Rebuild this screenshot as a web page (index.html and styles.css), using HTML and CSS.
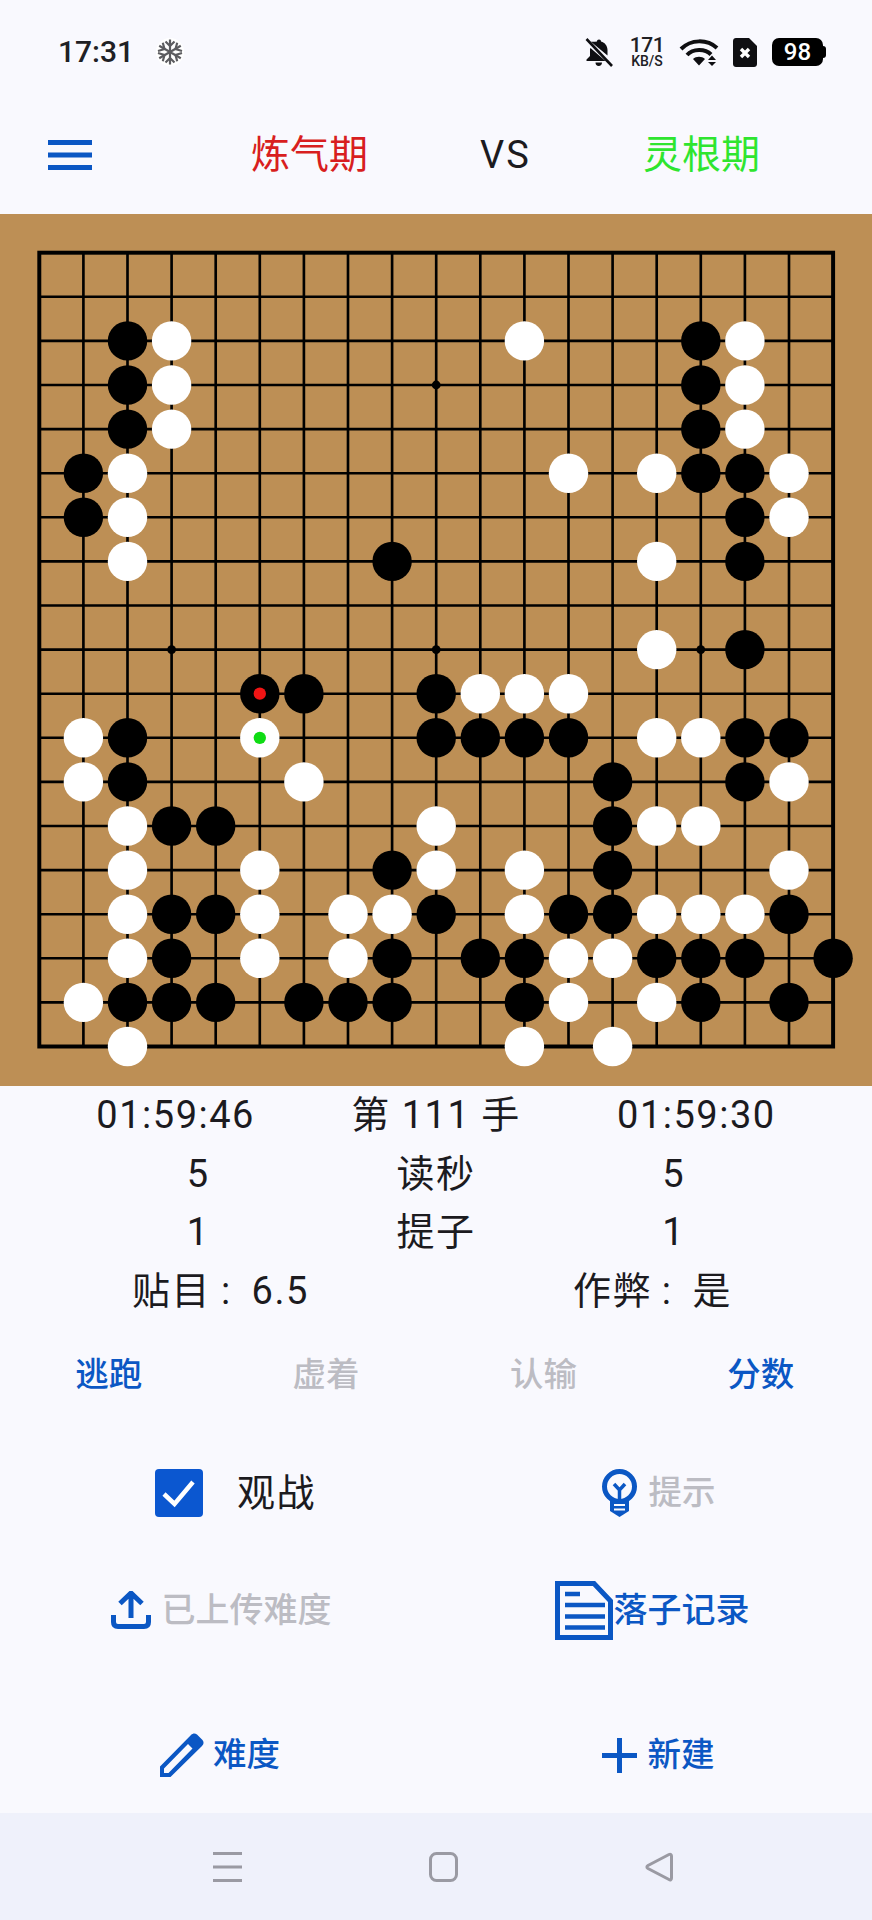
FILE: index.html
```html
<!DOCTYPE html>
<html lang="zh">
<head>
<meta charset="utf-8">
<title>围棋</title>
<link rel="stylesheet" href="styles.css">
</head>
<body>
<div class="page">
  <div class="statusbar">
    <div class="status-left">
      <span class="clock">17:31</span>
      <svg class="snow" viewBox="0 0 28 28"><circle cx="14" cy="14" r="14" fill="#fff"/><g class="snow-lines"><path d="M14 1.500V26.500M3.200 7.800L24.800 20.200M3.200 20.200L24.800 7.800"/><path d="M9.500 3.500L14 8L18.500 3.500M9.500 24.500L14 20L18.500 24.500M2 13L8.500 11L6.800 4.800M26 15L19.500 17L21.200 23.200M2 15L8.500 17L6.800 23.200M26 13L19.500 11L21.200 4.800"/></g></svg>
    </div>
    <div class="status-right">
      <svg class="bell" viewBox="0 0 28 29"><path class="ink" d="M14 1.500C15.300 1.500 16 2.400 16 3.500C20 4.500 22.500 8 22.500 12V17.500L6 3.800C7.300 3.500 9 3.800 12 3.500C12 2.400 12.700 1.500 14 1.500ZM5.500 10L20.500 23H1.500V21.500L5 18V11ZM10.500 24.500H17C17 26.500 15.700 28 13.700 28S10.500 26.500 10.500 24.500Z"/><path class="bell-slash" d="M1.500 1L27 28"/></svg>
      <div class="speed"><span class="speed-num">171</span><span class="speed-unit">KB/S</span></div>
      <svg class="wifi" viewBox="0 0 42 28"><path class="wifi-arc" d="M2 11C12 1 28 1 38 10M8 17C14 10.500 26 10.500 32 16.500"/><path class="ink" d="M14 21C17 18 23 18 26 21L20 27.500ZM33 17.500L37 22H29ZM33 28L29 24H37Z"/></svg>
      <svg class="sim" viewBox="0 0 24 29"><path class="ink" d="M3 0H16L24 8V26C24 27.700 22.700 29 21 29H3C1.300 29 0 27.700 0 26V3C0 1.300 1.300 0 3 0Z"/><path class="sim-x" d="M8 11L16 19M16 11L8 19"/></svg>
      <div class="battery"><span class="battery-level">98</span><span class="battery-nub"></span></div>
    </div>
  </div>

  <header class="header">
    <svg class="menu" viewBox="0 0 44 30"><path d="M0 2.500H44M0 15H44M0 27.500H44"/></svg>
    <div class="name name-red">炼气期</div>
    <div class="vs">VS</div>
    <div class="name name-green">灵根期</div>
  </header>

  <svg class="board" viewBox="0 0 872 872">
    <g transform="translate(39.3 38.7) scale(44.1)">
      <path class="grid" d="M1 0V18M2 0V18M3 0V18M4 0V18M5 0V18M6 0V18M7 0V18M8 0V18M9 0V18M10 0V18M11 0V18M12 0V18M13 0V18M14 0V18M15 0V18M16 0V18M17 0V18M0 1H18M0 2H18M0 3H18M0 4H18M0 5H18M0 6H18M0 7H18M0 8H18M0 9H18M0 10H18M0 11H18M0 12H18M0 13H18M0 14H18M0 15H18M0 16H18M0 17H18"/>
      <rect class="edge" width="18" height="18"/>
      <g class="black">
        <circle r=".1" cx="9" cy="3"/><circle r=".1" cx="3" cy="9"/><circle r=".1" cx="9" cy="9"/><circle r=".1" cx="15" cy="9"/>
        <circle r=".447" cx="2" cy="2"/><circle r=".447" cx="15" cy="2"/>
        <circle r=".447" cx="2" cy="3"/><circle r=".447" cx="15" cy="3"/>
        <circle r=".447" cx="2" cy="4"/><circle r=".447" cx="15" cy="4"/>
        <circle r=".447" cx="1" cy="5"/><circle r=".447" cx="15" cy="5"/><circle r=".447" cx="16" cy="5"/>
        <circle r=".447" cx="1" cy="6"/><circle r=".447" cx="16" cy="6"/>
        <circle r=".447" cx="8" cy="7"/><circle r=".447" cx="16" cy="7"/>
        <circle r=".447" cx="16" cy="9"/>
        <circle r=".447" cx="5" cy="10"/><circle r=".447" cx="6" cy="10"/><circle r=".447" cx="9" cy="10"/>
        <circle r=".447" cx="2" cy="11"/><circle r=".447" cx="9" cy="11"/><circle r=".447" cx="10" cy="11"/><circle r=".447" cx="11" cy="11"/><circle r=".447" cx="12" cy="11"/><circle r=".447" cx="16" cy="11"/><circle r=".447" cx="17" cy="11"/>
        <circle r=".447" cx="2" cy="12"/><circle r=".447" cx="13" cy="12"/><circle r=".447" cx="16" cy="12"/>
        <circle r=".447" cx="3" cy="13"/><circle r=".447" cx="4" cy="13"/><circle r=".447" cx="13" cy="13"/>
        <circle r=".447" cx="8" cy="14"/><circle r=".447" cx="13" cy="14"/>
        <circle r=".447" cx="3" cy="15"/><circle r=".447" cx="4" cy="15"/><circle r=".447" cx="9" cy="15"/><circle r=".447" cx="12" cy="15"/><circle r=".447" cx="13" cy="15"/><circle r=".447" cx="17" cy="15"/>
        <circle r=".447" cx="3" cy="16"/><circle r=".447" cx="8" cy="16"/><circle r=".447" cx="10" cy="16"/><circle r=".447" cx="11" cy="16"/><circle r=".447" cx="14" cy="16"/><circle r=".447" cx="15" cy="16"/><circle r=".447" cx="16" cy="16"/><circle r=".447" cx="18" cy="16"/>
        <circle r=".447" cx="2" cy="17"/><circle r=".447" cx="3" cy="17"/><circle r=".447" cx="4" cy="17"/><circle r=".447" cx="6" cy="17"/><circle r=".447" cx="7" cy="17"/><circle r=".447" cx="8" cy="17"/><circle r=".447" cx="11" cy="17"/><circle r=".447" cx="15" cy="17"/><circle r=".447" cx="17" cy="17"/>
      </g>
      <g class="white">
        <circle r=".447" cx="3" cy="2"/><circle r=".447" cx="11" cy="2"/><circle r=".447" cx="16" cy="2"/>
        <circle r=".447" cx="3" cy="3"/><circle r=".447" cx="16" cy="3"/>
        <circle r=".447" cx="3" cy="4"/><circle r=".447" cx="16" cy="4"/>
        <circle r=".447" cx="2" cy="5"/><circle r=".447" cx="12" cy="5"/><circle r=".447" cx="14" cy="5"/><circle r=".447" cx="17" cy="5"/>
        <circle r=".447" cx="2" cy="6"/><circle r=".447" cx="17" cy="6"/>
        <circle r=".447" cx="2" cy="7"/><circle r=".447" cx="14" cy="7"/>
        <circle r=".447" cx="14" cy="9"/>
        <circle r=".447" cx="10" cy="10"/><circle r=".447" cx="11" cy="10"/><circle r=".447" cx="12" cy="10"/>
        <circle r=".447" cx="1" cy="11"/><circle r=".447" cx="5" cy="11"/><circle r=".447" cx="14" cy="11"/><circle r=".447" cx="15" cy="11"/>
        <circle r=".447" cx="1" cy="12"/><circle r=".447" cx="6" cy="12"/><circle r=".447" cx="17" cy="12"/>
        <circle r=".447" cx="2" cy="13"/><circle r=".447" cx="9" cy="13"/><circle r=".447" cx="14" cy="13"/><circle r=".447" cx="15" cy="13"/>
        <circle r=".447" cx="2" cy="14"/><circle r=".447" cx="5" cy="14"/><circle r=".447" cx="9" cy="14"/><circle r=".447" cx="11" cy="14"/><circle r=".447" cx="17" cy="14"/>
        <circle r=".447" cx="2" cy="15"/><circle r=".447" cx="5" cy="15"/><circle r=".447" cx="7" cy="15"/><circle r=".447" cx="8" cy="15"/><circle r=".447" cx="11" cy="15"/><circle r=".447" cx="14" cy="15"/><circle r=".447" cx="15" cy="15"/><circle r=".447" cx="16" cy="15"/>
        <circle r=".447" cx="2" cy="16"/><circle r=".447" cx="5" cy="16"/><circle r=".447" cx="7" cy="16"/><circle r=".447" cx="12" cy="16"/><circle r=".447" cx="13" cy="16"/>
        <circle r=".447" cx="1" cy="17"/><circle r=".447" cx="12" cy="17"/><circle r=".447" cx="14" cy="17"/>
        <circle r=".447" cx="2" cy="18"/><circle r=".447" cx="11" cy="18"/><circle r=".447" cx="13" cy="18"/>
      </g>
      <circle class="mark-red" r=".14" cx="5" cy="10"/>
      <circle class="mark-green" r=".14" cx="5" cy="11"/>
    </g>
  </svg>

  <section class="stats">
    <div class="stat-row evenly"><span>01:59:46</span><span>第 111 手</span><span>01:59:30</span></div>
    <div class="stat-row evenly"><span>5</span><span>读秒</span><span>5</span></div>
    <div class="stat-row evenly"><span>1</span><span>提子</span><span>1</span></div>
    <div class="stat-row around"><span>贴目 :&nbsp; 6.5</span><span>作弊 :&nbsp; 是</span></div>
  </section>

  <nav class="actions">
    <span class="act on">逃跑</span>
    <span class="act off">虚着</span>
    <span class="act off">认输</span>
    <span class="act on">分数</span>
  </nav>

  <section class="tools">
    <div class="tool tool-watch">
      <svg class="check" viewBox="0 0 48 48"><rect width="48" height="48" rx="4"/><path d="M9 25L19.500 35L38 13"/></svg>
      <span class="watch-label">观战</span>
    </div>
    <div class="tool gap-hint">
      <svg class="bulb" viewBox="0 0 37 48"><circle class="bulb-head" cx="18.500" cy="17.500" r="15"/><path class="bulb-stem" d="M13 15L18.500 21L24 15M18.500 21V31"/><path class="bulb-fill" d="M9 31H28V42L18.500 48L9 42Z"/><path class="bulb-gap" d="M13 36H24M13 40.500H24"/></svg>
      <span class="off">提示</span>
    </div>
    <div class="tool gap-upload">
      <svg class="upload" viewBox="0 0 40 38"><path d="M20 2V27M9 12.500L20 2L31 12.500M2.500 24V31C2.500 34 4 35.500 7 35.500H33C36 35.500 37.500 34 37.500 31V24"/></svg>
      <span class="off">已上传难度</span>
    </div>
    <div class="tool tool-doc">
      <svg class="doc" viewBox="0 0 58 59"><path class="doc-outline" d="M2.500 2.500H39L55.500 20V56.500H2.500Z"/><path class="doc-lines" d="M10 13H25M10 24H50M10 35.500H50M10 46.500H50"/></svg>
      <span class="on">落子记录</span>
    </div>
    <div class="tool tool-low gap-pen">
      <svg class="pen" viewBox="0 0 44 44"><path d="M0 44V33.500L31 2C33 0 35 0 37 1.500L42.500 7C44 9 44 11 42 13L10.500 44ZM4 40H8.500L32.500 15.500L28 11L4 35.500Z"/></svg>
      <span class="on">难度</span>
    </div>
    <div class="tool tool-low gap-hint">
      <svg class="plus" viewBox="0 0 35 35"><path d="M0 17.500H35M17.500 0V35"/></svg>
      <span class="on">新建</span>
    </div>
  </section>

  <footer class="navbar">
    <svg class="nav-menu" viewBox="0 0 29 30"><path d="M0 1.500H29M0 15H29M0 28.500H29"/></svg>
    <svg class="nav-home" viewBox="0 0 29 30"><rect x="1.500" y="1.500" width="26" height="27" rx="6"/></svg>
    <svg class="nav-back" viewBox="0 0 28 30"><path d="M24 2.500C25.500 1.700 26.500 2.500 26.500 4V26C26.500 27.500 25.500 28.500 24 27.500L3 16.500C1.500 15.500 1.500 14.500 3 13.500Z"/></svg>
  </footer>
</div>
</body>
</html>
```
FILE: styles.css
```css
* { box-sizing: border-box; }
html, body { margin: 0; padding: 0; }
body {
  background: #f9f9fe;
  color: #1c1b1f;
  font-family: Roboto, "Noto Sans CJK SC", sans-serif;
}
.page { width: 872px; height: 1920px; display: flex; flex-direction: column; overflow: hidden; }

/* status bar */
.statusbar { height: 84px; padding: 20px 49px 0 58px; display: flex; justify-content: space-between; align-items: center; }
.status-left { display: flex; align-items: center; gap: 22px; }
.clock { font-size: 30px; font-weight: 500; line-height: 36px; color: #202024; }
.snow { width: 28px; height: 28px; }
.snow-lines path { fill: none; stroke: #5c5c60; stroke-width: 2.200; }
.status-right { display: flex; align-items: center; }
.ink { fill: #0f0f12; }
.bell { width: 28px; height: 29px; margin-right: 16px; }
.bell-slash { fill: none; stroke: #0f0f12; stroke-width: 2.600; }
.speed { width: 36px; margin-right: 14px; display: flex; flex-direction: column; align-items: center; color: #202024; font-weight: 500; }
.speed-num { font-size: 21px; line-height: 19px; letter-spacing: -.5px; }
.speed-unit { font-size: 14px; line-height: 13px; }
.wifi { width: 42px; height: 28px; margin-right: 12px; }
.wifi-arc { fill: none; stroke: #0f0f12; stroke-width: 4; }
.sim { width: 24px; height: 29px; margin-right: 15px; }
.sim-x { fill: none; stroke: #fff; stroke-width: 3.400; }
.battery { position: relative; width: 51px; height: 28px; border-radius: 7px; background: #000; color: #fff; display: flex; align-items: center; justify-content: center; }
.battery-level { font-size: 24px; font-weight: 500; line-height: 28px; }
.battery-nub { position: absolute; top: 8px; right: -3px; width: 3px; height: 12px; background: #000; border-radius: 0 3px 3px 0; }

/* header */
.header { height: 130px; display: flex; align-items: center; padding: 12px 0 0 48px; }
.menu { width: 44px; height: 30px; flex: none; margin-right: 159px; }
.menu path { fill: none; stroke: #0b57c4; stroke-width: 5; }
.name { font-size: 39px; line-height: 48px; width: 117px; text-align: center; }
.name-red { color: #d81e20; }
.name-green { color: #2fe52f; }
.vs { font-size: 38px; line-height: 48px; width: 51px; text-align: center; margin: 0 112px; letter-spacing: 2px; }

/* board */
.board { display: block; width: 872px; height: 872px; flex: none; background: #bd8f55; }
.grid { fill: none; stroke: #000; stroke-width: .06; }
.edge { fill: none; stroke: #000; stroke-width: .09; }
.black { fill: #000; }
.white { fill: #fff; }
.mark-red { fill: #f01414; }
.mark-green { fill: #0fdc14; }

/* stats */
.stats { font-size: 38px; }
.stat-row { height: 58.500px; display: flex; align-items: center; line-height: 48px; letter-spacing: 1.500px; }
.evenly { justify-content: space-evenly; }
.around { justify-content: space-around; padding-right: 8px; word-spacing: -1px; }

/* action row */
.actions { height: 114px; margin-top: -2px; padding-right: 2.500px; display: flex; justify-content: space-around; align-items: center; font-size: 33.500px; }
.act { line-height: 44px; }
.on { color: #0b57c4; font-weight: 500; }
.off { color: #bcbcc3; font-weight: 500; }

/* tools */
.tools { display: grid; grid-template-columns: 436px 436px; grid-template-rows: 117px 117px 144.500px; margin-top: 2.500px; font-size: 33.500px; }
.tool { display: flex; align-items: center; justify-content: center; line-height: 44px; }
.tool-low { padding-top: 29px; }
.tool-watch { gap: 34px; padding-left: 35px; }
.watch-label { font-size: 38px; letter-spacing: 1.500px; }
.gap-hint { gap: 11px; padding-left: 8px; }
.gap-upload { gap: 11px; padding-left: 6px; font-size: 34px; }
.gap-pen { gap: 9px; padding-left: 4px; }
.tool-doc { gap: 1px; padding-right: 4px; font-size: 34px; }
.check { width: 48px; height: 48px; }
.check rect { fill: #0b57d0; }
.check path { fill: none; stroke: #fff; stroke-width: 4.500; }
.bulb { width: 37px; height: 48px; }
.bulb-head { fill: none; stroke: #0b57c4; stroke-width: 5; }
.bulb-stem { fill: none; stroke: #0b57c4; stroke-width: 3.500; }
.bulb-fill { fill: #0b57c4; }
.bulb-gap { fill: none; stroke: #f9f9fe; stroke-width: 2; }
.upload { width: 40px; height: 38px; }
.upload path { fill: none; stroke: #0b57c4; stroke-width: 5; }
.doc { width: 58px; height: 59px; }
.doc-outline { fill: none; stroke: #0b57c4; stroke-width: 5; }
.doc-lines { fill: none; stroke: #0b57c4; stroke-width: 4.500; }
.pen { width: 44px; height: 44px; }
.pen path { fill: #0b57c4; fill-rule: evenodd; }
.plus { width: 35px; height: 35px; }
.plus path { fill: none; stroke: #0b57c4; stroke-width: 5; }

/* nav bar */
.navbar { height: 107px; flex: none; background: #eff1fb; display: flex; align-items: center; gap: 187px; padding-left: 213px; }
.navbar svg { flex: none; fill: none; stroke: #9a9aa3; stroke-width: 3; }
.nav-menu, .nav-home { width: 29px; height: 30px; }
.nav-back { width: 28px; height: 30px; }
```
